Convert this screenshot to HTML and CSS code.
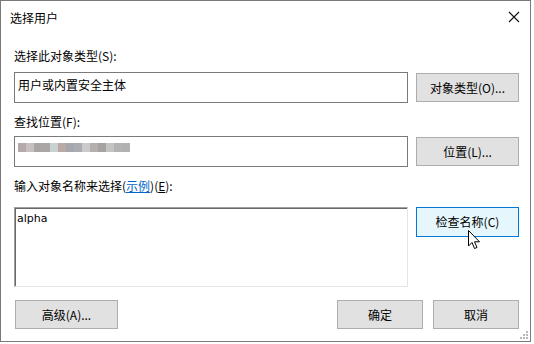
FILE: index.html
```html
<!DOCTYPE html>
<html>
  <head>
    <meta charset="UTF-8">
    <title>选择用户</title>
    <link rel="stylesheet" href="styles.css">
  </head>
  <body>
    <div class="window">
      <div class="titlebar">
        <span class="title">选择用户</span>
        <svg class="close" width="12" height="12" viewBox="0 0 12 12">
          <path d="M1 1 L11 11 M11 1 L1 11" stroke="#111" stroke-width="1.1" fill="none"/>
        </svg>
      </div>

      <div class="content">
        <div class="label first">选择此对象类型(S):</div>
        <div class="row">
          <div class="field">用户或内置安全主体</div>
          <div class="btn">对象类型(O)...</div>
        </div>

        <div class="label second">查找位置(F):</div>
        <div class="row">
          <div class="field">
            <div class="blur">
              <span style="background:#b4a9a8"></span>
              <span style="background:#c6c0c0"></span>
              <span style="background:#a9a5a5"></span>
              <span style="background:#aaa6a6"></span>
              <span style="background:#c9d1d1"></span>
              <span style="background:#b9aaa6"></span>
              <span style="background:#a6a6ad"></span>
              <span style="background:#ababb2"></span>
              <span style="background:#cacaca"></span>
              <span style="background:#b5b0b0"></span>
              <span style="background:#a6a2a2"></span>
              <span style="background:#c4c4c4"></span>
              <span style="background:#b3b3b3"></span>
              <span style="background:#b1b1b1"></span>
            </div>
          </div>
          <div class="btn">位置(L)...</div>
        </div>

        <div class="label third">输入对象名称来选择(<a class="link">示例</a>)(<u>E</u>):</div>
        <div class="row top">
          <div class="names">alpha</div>
          <div class="btn hover">检查名称(C)</div>
        </div>

        <div class="footer">
          <div class="btn wide">高级(A)...</div>
          <div class="actions">
            <div class="btn small">确定</div>
            <div class="btn small">取消</div>
          </div>
        </div>
      </div>

      <svg class="cursor" width="13" height="20" viewBox="0 0 13 20">
        <path d="M0.5 0.5 L0.5 16 L4 12.5 L6.5 18.5 L9 17.5 L6.5 11.8 L11.5 11.8 Z" fill="#fff" stroke="#000" stroke-width="1" stroke-linejoin="miter"/>
      </svg>

      <div class="grip">
        <i style="left:6px;top:0"></i>
        <i style="left:3px;top:3px"></i>
        <i style="left:6px;top:3px"></i>
        <i style="left:0;top:6px"></i>
        <i style="left:3px;top:6px"></i>
        <i style="left:6px;top:6px"></i>
      </div>
    </div>
  </body>
</html>
```

FILE: styles.css
```css
body {
  margin: 0;
  background-color: #fff;
  font-family: "Noto Sans CJK SC", "Noto Sans", sans-serif;
  font-size: 12px;
  color: #000;
}

.window {
  position: relative;
  box-sizing: border-box;
  width: 531px;
  height: 342px;
  border: 1px solid #7a7a7a;
  background-color: #fff;
}

.titlebar {
  height: 33px;
  display: flex;
  align-items: center;
  justify-content: space-between;
  padding: 0 6px 0 9px;
}

.title {
  line-height: 16px;
  margin-top: 1px;
}

.close {
  margin-right: 4px;
  margin-top: -1px;
}

.content {
  display: flex;
  flex-direction: column;
  padding: 0 11px 0 13px;
}

.label {
  line-height: 16px;
}

.label.first {
  margin-top: 14px;
}

.label.second {
  margin-top: 11px;
}

.label.third {
  margin-top: 11px;
}

.link {
  color: #0066cc;
  text-decoration: underline;
}

.row {
  display: flex;
  align-items: center;
  gap: 8px;
  margin-top: 8px;
}

.label.second + .row {
  margin-top: 6px;
}

.row.top {
  align-items: flex-start;
  margin-top: 13px;
}

.field {
  box-sizing: border-box;
  width: 394px;
  height: 31px;
  border: 1px solid #7a7a7a;
  padding: 4px 3px;
  line-height: 16px;
}

.blur {
  display: flex;
  margin-top: 2px;
}

.blur span {
  width: 8px;
  height: 9px;
}

.names {
  box-sizing: border-box;
  width: 394px;
  height: 80px;
  border-top: 1px solid #a0a0a0;
  border-left: 1px solid #a0a0a0;
  border-right: 1px solid #e3e3e3;
  border-bottom: 1px solid #e3e3e3;
  box-shadow: inset 1px 1px 0 #696969;
  padding: 4px 2px;
  font-family: "DejaVu Sans", sans-serif;
  font-size: 11px;
  line-height: 14px;
}

.btn {
  box-sizing: border-box;
  width: 103px;
  height: 29px;
  border: 1px solid #adadad;
  background-color: #e1e1e1;
  display: flex;
  align-items: center;
  justify-content: center;
  line-height: 16px;
}

.btn.hover {
  height: 30px;
  border-color: #0078d7;
  background-color: #e5f7fc;
}

.footer {
  display: flex;
  justify-content: space-between;
  margin-top: 13px;
  padding-left: 1px;
}

.actions {
  display: flex;
  gap: 10px;
}

.btn.small {
  width: 86px;
}

.cursor {
  position: absolute;
  left: 467px;
  top: 229px;
}

.grip {
  position: absolute;
  right: 2px;
  bottom: 2px;
  width: 8px;
  height: 8px;
}

.grip i {
  position: absolute;
  width: 2px;
  height: 2px;
  background-color: #b8b8b8;
}
```
